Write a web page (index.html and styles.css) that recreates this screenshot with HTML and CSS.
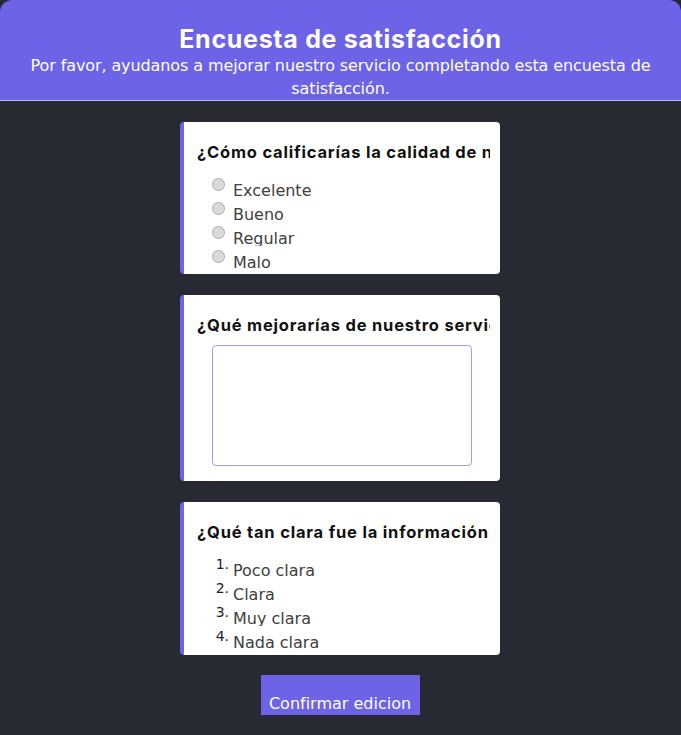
FILE: index.html
```html
<!DOCTYPE html>
<html lang="es">
<head>
<meta charset="utf-8">
<title>Encuesta de satisfacción</title>
<link rel="stylesheet" href="styles.css">
</head>
<body>
<header class="hero">
  <h1 class="hero-title">Encuesta de satisfacción</h1>
  <p class="hero-text">Por favor, ayudanos a mejorar nuestro servicio completando esta encuesta de satisfacción.</p>
</header>
<main class="survey">
  <section class="card card-radio">
    <h2 class="question">¿Cómo calificarías la calidad de nuestro servicio?</h2>
    <ul class="options">
      <li class="option"><span class="radio"></span><span class="opt-label">Excelente</span></li>
      <li class="option"><span class="radio"></span><span class="opt-label">Bueno</span></li>
      <li class="option"><span class="radio"></span><span class="opt-label">Regular</span></li>
      <li class="option"><span class="radio"></span><span class="opt-label">Malo</span></li>
    </ul>
  </section>
  <section class="card card-text">
    <h2 class="question">¿Qué mejorarías de nuestro servicio?</h2>
    <textarea class="answer"></textarea>
  </section>
  <section class="card card-list">
    <h2 class="question">¿Qué tan clara fue la información brindada?</h2>
    <ol class="scale">
      <li class="scale-item"><span class="num">1.</span><span class="opt-label">Poco clara</span></li>
      <li class="scale-item"><span class="num">2.</span><span class="opt-label">Clara</span></li>
      <li class="scale-item"><span class="num">3.</span><span class="opt-label">Muy clara</span></li>
      <li class="scale-item"><span class="num">4.</span><span class="opt-label">Nada clara</span></li>
    </ol>
  </section>
  <button class="confirm" type="button">Confirmar edicion</button>
</main>
</body>
</html>
```
FILE: styles.css
```css
* { box-sizing: border-box; }
html, body { margin: 0; }
body {
  background: #282a33;
  font-family: "DejaVu Sans", sans-serif;
  height: 735px;
  overflow: hidden;
}
.hero {
  background: #6c63e6;
  border-radius: 12px 12px 0 0;
  border-bottom: 1px solid #b9b4f3;
  padding: 24px 20px 0;
  height: 101px;
  text-align: center;
  color: #fff;
}
.hero-title {
  margin: 0;
  font-family: Inter, sans-serif;
  font-weight: 700;
  font-size: 25px;
  letter-spacing: 0.7px;
  line-height: 30px;
}
.hero-text {
  margin: 0 auto;
  max-width: 640px;
  font-size: 16px;
  letter-spacing: -0.1px;
  line-height: 23px;
}
.survey {
  display: flex;
  flex-direction: column;
  align-items: center;
  gap: 21px;
  padding-top: 21px;
}
.card {
  width: 320px;
  margin-right: 1px;
  background: #fff;
  border-radius: 4px;
  border-left: 4px solid #6c63e6;
  padding: 0 10px 0 13px;
  overflow: hidden;
}
.card-radio { height: 152px; }
.card-text { height: 186px; }
.card-list { height: 153px; }
.question {
  margin: 0 0 12px;
  padding-top: 20px;
  font-family: Inter, sans-serif;
  font-weight: 700;
  font-size: 16.5px;
  letter-spacing: 0.8px;
  line-height: 20px;
  color: #111;
  white-space: nowrap;
  overflow: hidden;
}
.options, .scale {
  list-style: none;
  margin: 0;
  padding: 0;
}
.options { padding-left: 15px; }
.option, .scale-item {
  display: flex;
  height: 24px;
  overflow: hidden;
}
.radio {
  flex: none;
  width: 13px;
  height: 13px;
  margin-top: 4px;
  border-radius: 50%;
  border: 1px solid #a9a9a9;
  background: #dadada;
}
.opt-label {
  margin-left: 8px;
  padding-top: 8px;
  font-size: 16px;
  line-height: 18px;
  color: #404040;
}
.num {
  flex: none;
  width: 32px;
  text-align: right;
  padding-top: 3px;
  font-size: 14px;
  line-height: 15px;
  color: #222;
}
.scale-item .opt-label { margin-left: 4px; }
.answer {
  display: block;
  margin: -2px 0 0 15px;
  width: 260px;
  height: 121px;
  border: 1px solid #a29cf2;
  border-radius: 4px;
  resize: none;
  background: #fff;
}
.confirm {
  margin-top: -1px;
  margin-right: 1px;
  width: 159px;
  height: 40px;
  padding: 18px 0 0;
  border: none;
  background: #6c63e6;
  color: #fff;
  font-family: "DejaVu Sans", sans-serif;
  font-size: 16px;
  line-height: 18px;
  overflow: hidden;
}
```
